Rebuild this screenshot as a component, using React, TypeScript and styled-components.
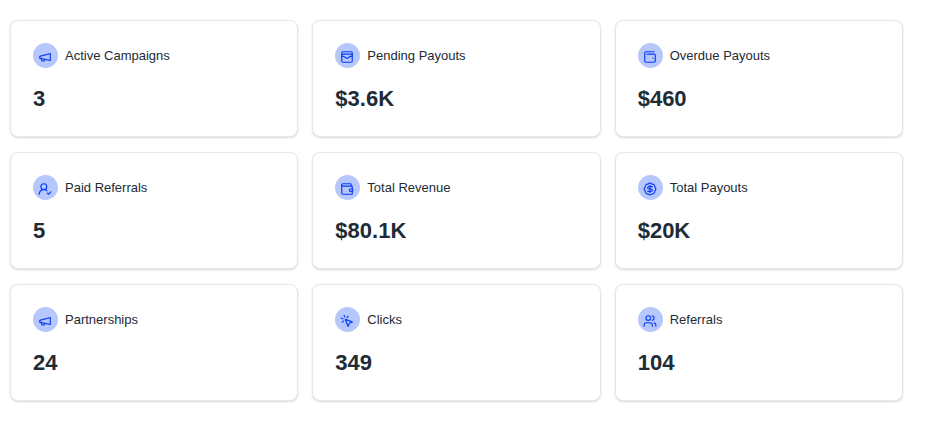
import React from "react";
import styled, { createGlobalStyle } from "styled-components";
import type { ComponentType } from "react";
import { LuMegaphone } from "react-icons/lu";
import {
  BadgeDollarSign,
  MousePointerClick,
  UserRoundCheck,
  Users,
  Wallet,
  WalletCards,
  WalletMinimal,
} from "lucide-react";

const GlobalStyle = createGlobalStyle`
  * {
    box-sizing: border-box;
  }

  body {
    margin: 0;
    background: #ffffff;
    color: #212b36;
    font-family: "Liberation Sans", Arial, sans-serif;
  }
`;

const Grid = styled.main`
  display: grid;
  grid-template-columns: repeat(3, minmax(0, 1fr));
  gap: 15px 14px;
  padding: 20px 24px 20px 10px;
`;

const Card = styled.section`
  display: flex;
  flex-direction: column;
  gap: 17px;
  padding: 22px 22px 23px;
  border: 1px solid #e5e7eb;
  border-radius: 8px;
  background: #ffffff;
  box-shadow: 0 1px 2px rgba(0, 0, 0, 0.15);
`;

const CardHeader = styled.header`
  display: flex;
  align-items: center;
  gap: 7px;
`;

const IconBadge = styled.span`
  display: flex;
  flex: none;
  width: 25px;
  height: 25px;
  padding: 7px 0 0 5px;
  border-radius: 50%;
  background: #b5c7fb;
  color: #0a3cf5;

  svg {
    width: 14px;
    height: 14px;
  }
`;

const Label = styled.h2`
  margin: 0;
  font-size: 13px;
  font-weight: 400;
  line-height: 20px;
`;

const Value = styled.p`
  margin: 0;
  font-size: 22px;
  font-weight: 700;
  line-height: 28px;
`;

interface Metric {
  label: string;
  value: string;
  icon: ComponentType<{ "aria-hidden"?: boolean }>;
}

const metrics: Metric[] = [
  { label: "Active Campaigns", value: "3", icon: LuMegaphone },
  { label: "Pending Payouts", value: "$3.6K", icon: WalletCards },
  { label: "Overdue Payouts", value: "$460", icon: WalletMinimal },
  { label: "Paid Referrals", value: "5", icon: UserRoundCheck },
  { label: "Total Revenue", value: "$80.1K", icon: Wallet },
  { label: "Total Payouts", value: "$20K", icon: BadgeDollarSign },
  { label: "Partnerships", value: "24", icon: LuMegaphone },
  { label: "Clicks", value: "349", icon: MousePointerClick },
  { label: "Referrals", value: "104", icon: Users },
];

export default function App() {
  return (
    <>
      <GlobalStyle />
      <Grid>
        {metrics.map(({ label, value, icon: Icon }) => (
          <Card key={label}>
            <CardHeader>
              <IconBadge>
                <Icon aria-hidden />
              </IconBadge>
              <Label>{label}</Label>
            </CardHeader>
            <Value>{value}</Value>
          </Card>
        ))}
      </Grid>
    </>
  );
}
